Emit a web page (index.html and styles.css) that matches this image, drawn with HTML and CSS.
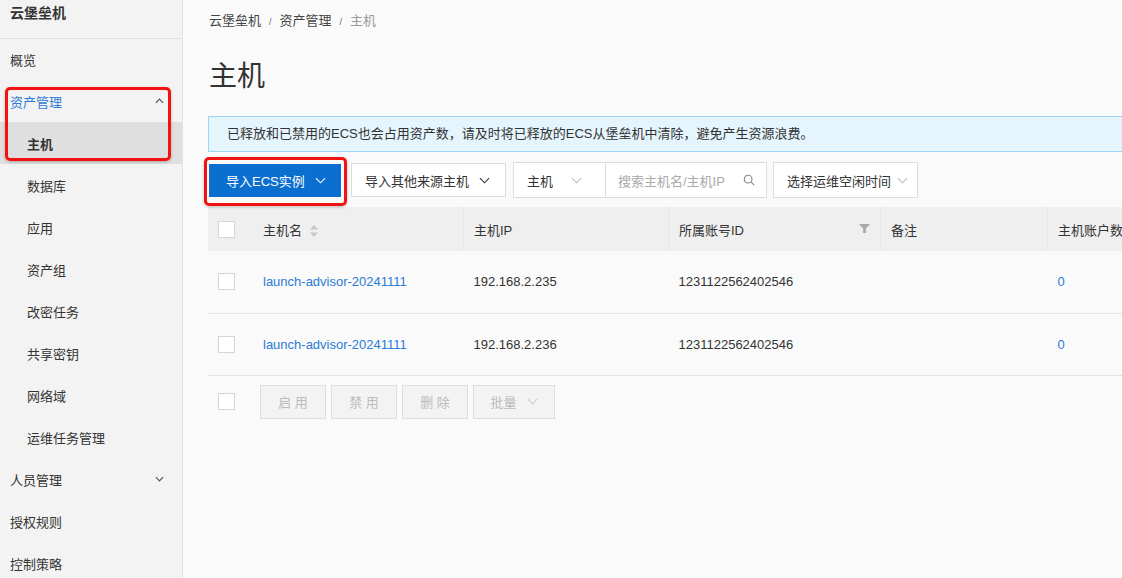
FILE: index.html
```html
<html>

<head>
    <title>主机 - 云堡垒机</title>
    <link rel="stylesheet" href="styles.css">
</head>

<body>
    <div class="layout">
        <aside class="sidebar">
            <div class="side-title">云堡垒机</div>
            <ul class="menu">
                <li class="menu-item">概览</li>
                <li class="menu-item open">资产管理
                    <svg class="caret" viewBox="0 0 10 6" width="9" height="6"><path d="M1 5 L5 1 L9 5" fill="none" stroke="#555" stroke-width="1.3"/></svg>
                </li>
                <li class="menu-item sub active">主机</li>
                <li class="menu-item sub">数据库</li>
                <li class="menu-item sub">应用</li>
                <li class="menu-item sub">资产组</li>
                <li class="menu-item sub">改密任务</li>
                <li class="menu-item sub">共享密钥</li>
                <li class="menu-item sub">网络域</li>
                <li class="menu-item sub">运维任务管理</li>
                <li class="menu-item">人员管理
                    <svg class="caret" viewBox="0 0 10 6" width="9" height="6"><path d="M1 1 L5 5 L9 1" fill="none" stroke="#555" stroke-width="1.3"/></svg>
                </li>
                <li class="menu-item">授权规则</li>
                <li class="menu-item">控制策略</li>
            </ul>
            <div class="mark mark-menu"></div>
        </aside>

        <main class="content">
            <div class="breadcrumb">
                <span>云堡垒机</span><span class="sep">/</span><span>资产管理</span><span class="sep">/</span><span class="current">主机</span>
            </div>
            <h1 class="page-title">主机</h1>

            <div class="notice">已释放和已禁用的ECS也会占用资产数，请及时将已释放的ECS从堡垒机中清除，避免产生资源浪费。</div>

            <div class="toolbar">
                <div class="btn-wrap">
                    <button class="btn btn-primary">导入ECS实例
                        <svg viewBox="0 0 12 7" width="11" height="7"><path d="M1 1 L6 6 L11 1" fill="none" stroke="#fff" stroke-width="1.2"/></svg>
                    </button>
                    <div class="mark mark-btn"></div>
                </div>
                <button class="btn btn-default">导入其他来源主机
                    <svg viewBox="0 0 12 7" width="11" height="7"><path d="M1 1 L6 6 L11 1" fill="none" stroke="#333" stroke-width="1.2"/></svg>
                </button>
                <div class="search-group">
                    <div class="search-type">主机
                        <svg viewBox="0 0 12 7" width="11" height="7"><path d="M1 1 L6 6 L11 1" fill="none" stroke="#bbb" stroke-width="1.2"/></svg>
                    </div>
                    <div class="search-input">搜索主机名/主机IP
                        <svg viewBox="0 0 14 14" width="12" height="12"><circle cx="6" cy="6" r="4.5" fill="none" stroke="#888" stroke-width="1.3"/><path d="M9.3 9.3 L13 13" stroke="#888" stroke-width="1.3"/></svg>
                    </div>
                </div>
                <div class="time-select">选择运维空闲时间
                    <svg viewBox="0 0 12 7" width="11" height="7"><path d="M1 1 L6 6 L11 1" fill="none" stroke="#bbb" stroke-width="1.2"/></svg>
                </div>
            </div>

            <table class="host-table">
                <thead>
                    <tr>
                        <th class="col-check"><span class="checkbox"></span></th>
                        <th class="col-name">主机名
                            <svg class="sort" viewBox="0 0 8 12" width="8" height="12"><path d="M4 0 L8 4.5 H0 Z" fill="#c6c6c6"/><path d="M4 12 L8 7.5 H0 Z" fill="#c6c6c6"/></svg>
                        </th>
                        <th class="col-ip">主机IP</th>
                        <th class="col-account">所属账号ID
                            <svg class="filter" viewBox="0 0 12 12" width="11" height="11"><path d="M0 1 H12 L7.5 6 V11 H4.5 V6 Z" fill="#aaa"/></svg>
                        </th>
                        <th class="col-note">备注</th>
                        <th class="col-count">主机账户数</th>
                    </tr>
                </thead>
                <tbody>
                    <tr>
                        <td class="col-check"><span class="checkbox"></span></td>
                        <td><a class="link">launch-advisor-20241111</a></td>
                        <td>192.168.2.235</td>
                        <td>1231122562402546</td>
                        <td></td>
                        <td class="num"><a class="link">0</a></td>
                    </tr>
                    <tr>
                        <td class="col-check"><span class="checkbox"></span></td>
                        <td><a class="link">launch-advisor-20241111</a></td>
                        <td>192.168.2.236</td>
                        <td>1231122562402546</td>
                        <td></td>
                        <td class="num"><a class="link">0</a></td>
                    </tr>
                </tbody>
            </table>

            <div class="batch-bar">
                <span class="checkbox"></span>
                <button class="btn-disabled">启 用</button>
                <button class="btn-disabled">禁 用</button>
                <button class="btn-disabled">删 除</button>
                <button class="btn-disabled wide">批量
                    <svg viewBox="0 0 12 7" width="11" height="7"><path d="M1 1 L6 6 L11 1" fill="none" stroke="#ccc" stroke-width="1.2"/></svg>
                </button>
            </div>
        </main>
    </div>
</body>

</html>
```

FILE: styles.css
```css
body {
    margin: 0;
    font-family: "Liberation Sans", "Noto Sans CJK SC", sans-serif;
    font-size: 13px;
    color: #333;
    background: #fafafa;
    overflow: hidden;
}

.layout {
    display: flex;
    height: 578px;
}

/* sidebar */

.sidebar {
    position: relative;
    width: 182px;
    flex-shrink: 0;
    background: #f3f3f3;
    border-right: 1px solid #e3e3e3;
}

.side-title {
    height: 38px;
    line-height: 26px;
    padding-left: 10px;
    font-size: 14px;
    font-weight: bold;
    color: #333;
    border-bottom: 1px solid #e2e2e2;
}

.menu {
    list-style: none;
    margin: -1px 0 0;
    padding: 0;
}

.menu-item {
    display: flex;
    align-items: center;
    justify-content: space-between;
    height: 42px;
    padding: 0 18px 0 10px;
    color: #333;
}

.menu-item.sub {
    padding-left: 27px;
}

.menu-item.open {
    color: #2d7bd5;
}

.menu-item.active {
    background: #dfdfdf;
    font-weight: bold;
}

/* red annotation boxes */

.mark {
    position: absolute;
    border: 3px solid #f21212;
    border-radius: 5px;
    box-shadow: 0 1px 3px rgba(0, 0, 0, 0.25);
    pointer-events: none;
}

.mark-menu {
    left: 5px;
    top: 87px;
    width: 160px;
    height: 68px;
}

.mark-btn {
    left: -5px;
    top: -7px;
    width: 137px;
    height: 43px;
}

/* content */

.content {
    flex: 1;
    min-width: 0;
    padding-left: 25px;
    overflow: hidden;
}

.breadcrumb {
    padding: 13px 0 0 1px;
    line-height: 16px;
    font-size: 13px;
    color: #444;
}

.breadcrumb .sep {
    display: inline-block;
    margin: 0 8px;
    font-size: 9px;
    color: #666;
}

.breadcrumb .current {
    color: #999;
}

.page-title {
    margin: 29px 0 0 1px;
    line-height: 36px;
    font-size: 28px;
    font-weight: normal;
    color: #333;
}

.notice {
    width: 1000px;
    margin-top: 21px;
    height: 34px;
    line-height: 34px;
    padding-left: 18px;
    font-size: 13px;
    color: #333;
    background: #e5f5fd;
    border: 1px solid #9ed5f5;
}

.toolbar {
    display: flex;
    align-items: center;
    margin: 10px 0 0 1px;
    height: 36px;
}

.btn-wrap {
    position: relative;
    margin-right: 10px;
}

.btn {
    display: flex;
    align-items: center;
    gap: 10px;
    height: 34px;
    font-family: inherit;
    font-size: 13px;
    cursor: pointer;
}

.btn-primary {
    width: 132px;
    height: 33px;
    padding-left: 17px;
    background: #0b6fd0;
    color: #fff;
    border: none;
}

.btn-default {
    width: 155px;
    padding-left: 13px;
    margin-right: 7px;
    background: #fff;
    color: #333;
    border: 1px solid #dcdcdc;
}

.search-group {
    display: flex;
    height: 34px;
    margin-right: 6px;
    background: #fff;
    border: 1px solid #dcdcdc;
}

.search-type {
    display: flex;
    align-items: center;
    gap: 18px;
    width: 78px;
    padding-left: 13px;
    border-right: 1px solid #dcdcdc;
}

.search-input {
    display: flex;
    align-items: center;
    gap: 18px;
    width: 148px;
    padding-left: 12px;
    color: #aaa;
}

.time-select {
    display: flex;
    align-items: center;
    gap: 6px;
    height: 34px;
    padding: 0 9px 0 13px;
    background: #fff;
    border: 1px solid #dcdcdc;
}

/* table */

.host-table {
    width: 1000px;
    margin-top: 9px;
    border-collapse: collapse;
    table-layout: fixed;
    font-size: 13px;
    color: #333;
}

.host-table th {
    height: 44px;
    padding: 0 10px;
    text-align: left;
    font-weight: normal;
    white-space: nowrap;
    background: #efefef;
    border-right: 1px solid #e6e6e6;
}

.host-table th.col-check {
    border-right: none;
}

.host-table td {
    height: 62px;
    padding: 0 10px;
    border-bottom: 1px solid #e3e3e3;
}

.col-check { width: 22px; }
.col-name { width: 190px; }
.col-ip { width: 184px; }
.col-account { width: 191px; }
.col-note { width: 146px; }

.host-table th.col-name {
    padding-left: 13px;
}

.host-table td:nth-child(2) {
    padding-left: 13px;
}

.sort {
    vertical-align: -2px;
    margin-left: 4px;
}

.filter {
    float: right;
    margin-top: 3px;
}

.checkbox {
    display: inline-block;
    width: 15px;
    height: 15px;
    background: #fff;
    border: 1px solid #d6d6d6;
    vertical-align: middle;
}

.link {
    color: #2b7bd6;
    text-decoration: none;
}

.batch-bar {
    display: flex;
    align-items: center;
    gap: 5px;
    height: 34px;
    margin-top: 9px;
    padding-left: 10px;
}

.batch-bar .checkbox {
    margin-right: 20px;
}

.btn-disabled {
    display: flex;
    align-items: center;
    justify-content: center;
    gap: 10px;
    width: 66px;
    height: 34px;
    font-family: inherit;
    font-size: 13px;
    color: #bbb;
    background: #f3f3f3;
    border: 1px solid #dedede;
}

.btn-disabled.wide {
    width: 82px;
}
```
